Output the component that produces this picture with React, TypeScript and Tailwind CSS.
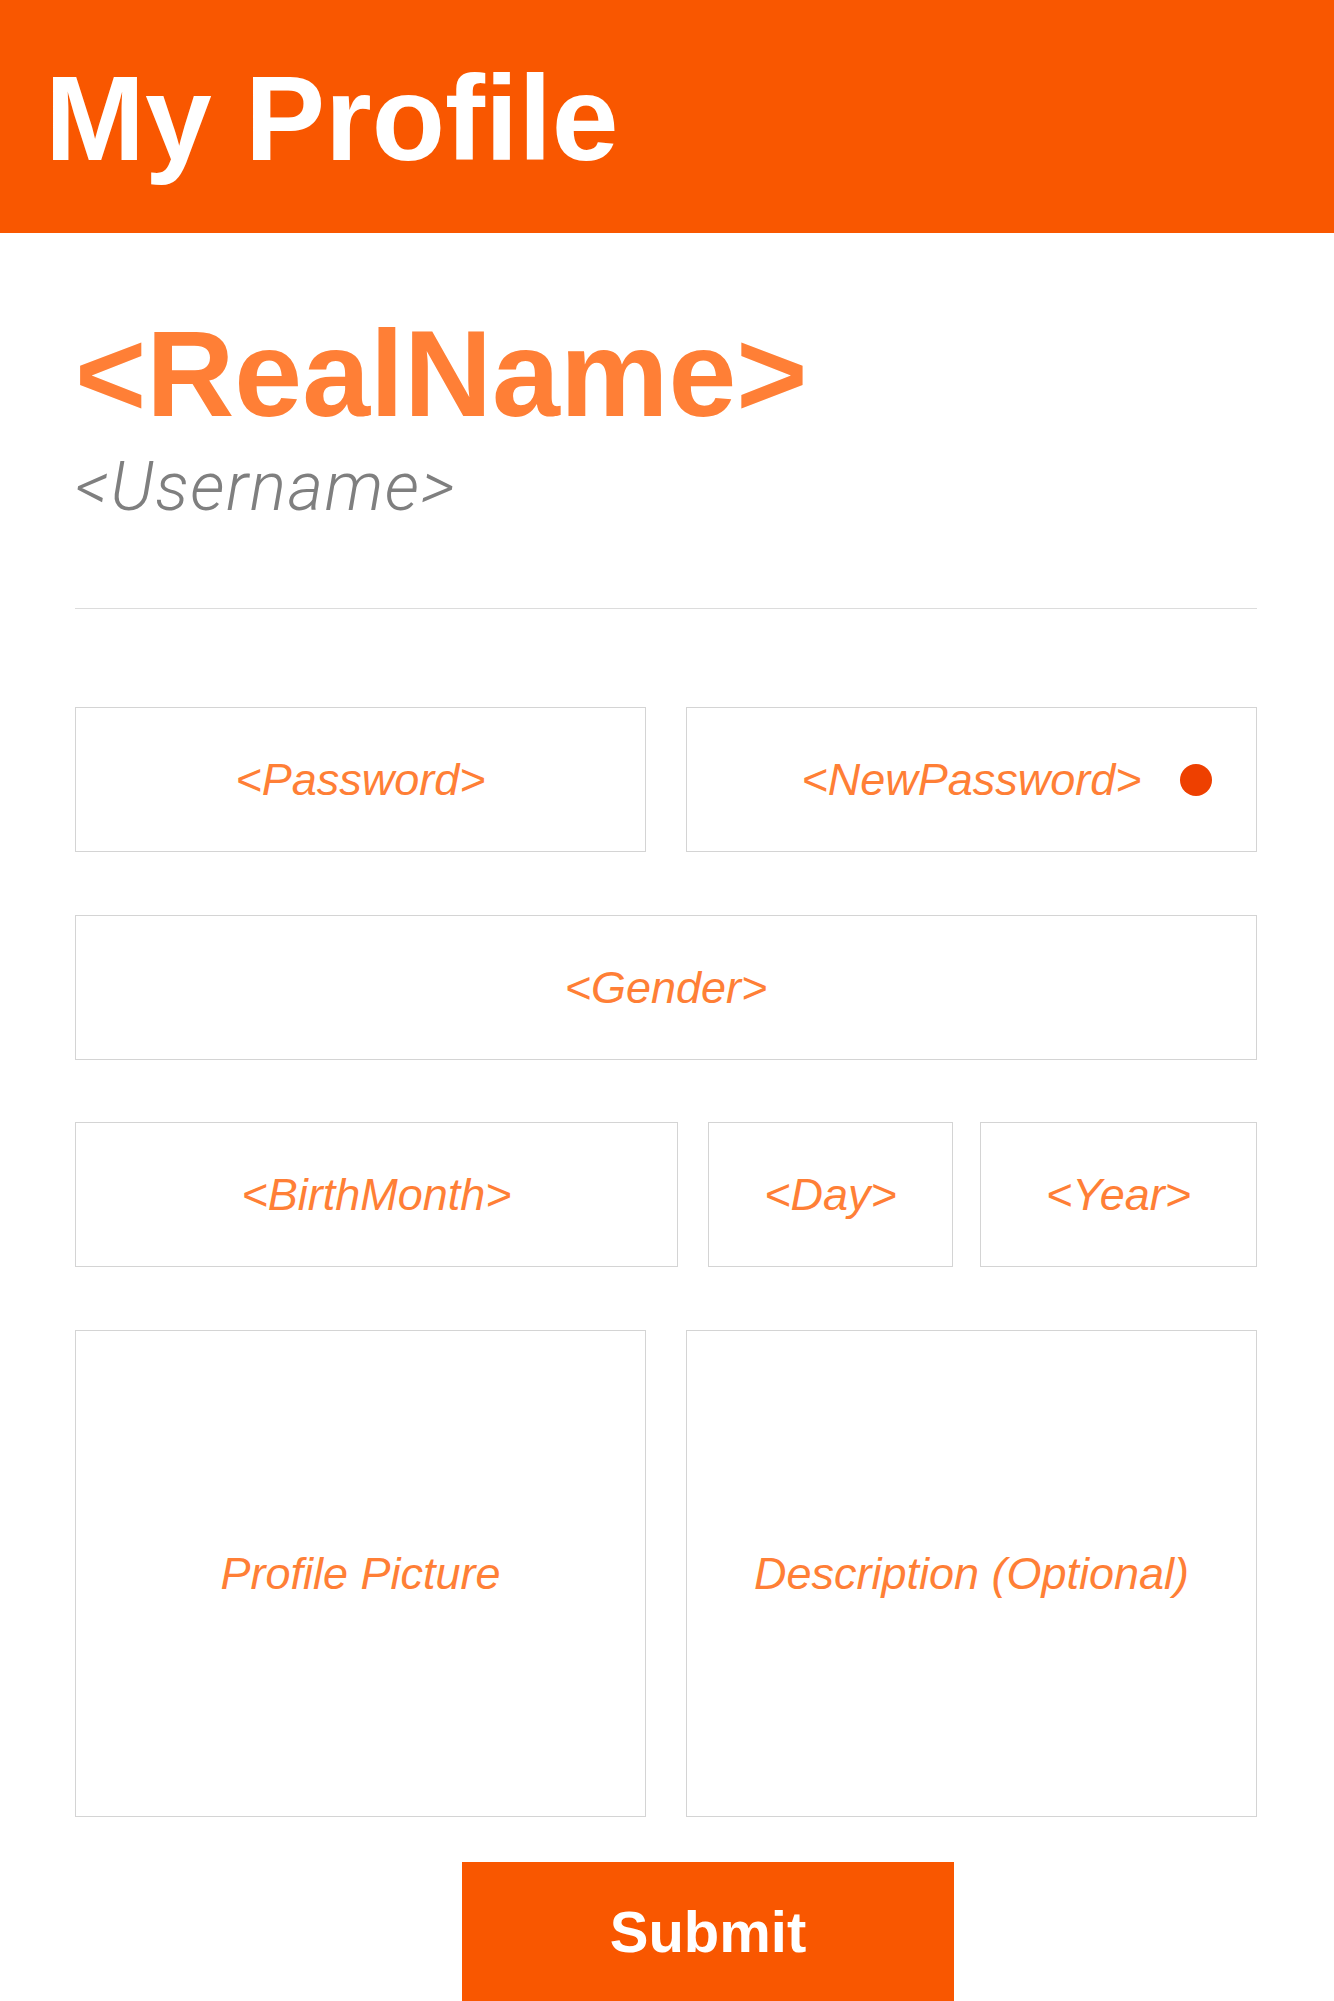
import React from "react";

const orange = "text-[#ff7f36]";

interface FieldProps {
    label: string;
    className?: string;
    children?: React.ReactNode;
}

const Field: React.FC<FieldProps> = ({ label, className = "", children }) => {
    return (
        <div className={`relative flex items-center justify-center border border-[#d4d4d4] bg-white ${className}`}>
            <span className={`italic text-[45px] leading-none ${orange}`}>{label}</span>
            {children}
        </div>
    );
};

const App: React.FC = () => {
    return (
        <div className="w-[1334px] h-[2001px] overflow-hidden bg-white font-['Liberation_Sans',Arial,sans-serif]">
            <header className="h-[233px] bg-[#f95700] pl-[45px] pt-[58px]">
                <h1 className="text-[120px] leading-none font-bold text-white">My Profile</h1>
            </header>

            <main className="pl-[75px] pr-[77px]">
                <div className="pt-[80px]">
                    <h2 className={`text-[122px] leading-none font-bold ${orange}`}>&lt;RealName&gt;</h2>
                    <p className="mt-[18px] text-[68px] leading-none italic font-light tracking-[1.6px] text-[#7f7f7f] font-['Roboto',sans-serif]">
                        &lt;Username&gt;
                    </p>
                </div>

                <hr className="mt-[87px] border-0 h-px bg-[#dcdcdc]" />

                <form className="mt-[98px]" onSubmit={(e) => e.preventDefault()}>
                    <div className="grid grid-cols-2 gap-x-[40px]">
                        <Field label="<Password>" className="h-[145px]" />
                        <Field label="<NewPassword>" className="h-[145px]">
                            <span className="absolute right-[44px] top-1/2 -translate-y-1/2 w-[32px] h-[32px] rounded-full bg-[#ee4000]" />
                        </Field>
                    </div>

                    <Field label="<Gender>" className="mt-[63px] h-[145px]" />

                    <div className="mt-[62px] flex">
                        <Field label="<BirthMonth>" className="w-[603px] h-[145px]" />
                        <Field label="<Day>" className="ml-[30px] w-[245px] h-[145px]" />
                        <Field label="<Year>" className="ml-[27px] flex-1 h-[145px]" />
                    </div>

                    <div className="mt-[63px] grid grid-cols-2 gap-x-[40px]">
                        <Field label="Profile Picture" className="h-[487px]" />
                        <Field label="Description (Optional)" className="h-[487px]" />
                    </div>

                    <button
                        type="submit"
                        className="mt-[45px] ml-[387px] w-[492px] h-[140px] bg-[#f95700] text-white text-[58px] font-bold leading-none"
                    >
                        Submit
                    </button>
                </form>
            </main>
        </div>
    );
};

export default App;
